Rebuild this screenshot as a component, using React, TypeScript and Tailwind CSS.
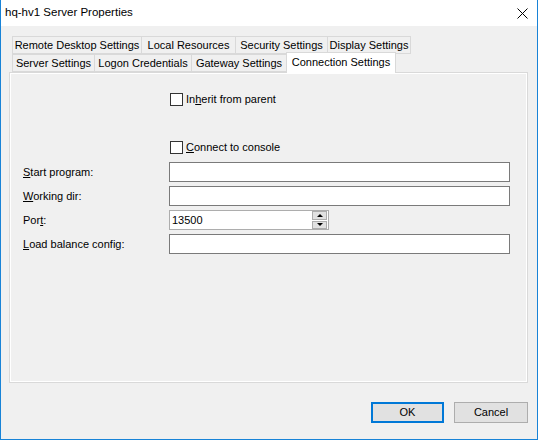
import type { ReactNode } from "react";

const TOP_TABS = [
	{ label: "Remote Desktop Settings", width: 129 },
	{ label: "Local Resources", width: 94 },
	{ label: "Security Settings", width: 92 },
	{ label: "Display Settings", width: 84 },
];

const BOTTOM_TABS = [
	{ label: "Server Settings", width: 82 },
	{ label: "Logon Credentials", width: 97 },
	{ label: "Gateway Settings", width: 95 },
	{ label: "Connection Settings", width: 110, active: true },
];

function Tab({
	label,
	width,
	active = false,
}: {
	label: string;
	width: number;
	active?: boolean;
}) {
	if (active) {
		return (
			<div
				className="relative z-10 -mb-px flex h-[21px] shrink-0 items-start justify-center whitespace-nowrap border border-b-0 border-[#d9d9d9] bg-white pt-[4px]"
				style={{ width }}
			>
				{label}
			</div>
		);
	}
	return (
		<div
			className="flex h-[18px] shrink-0 items-center justify-center whitespace-nowrap border border-r-0 border-[#d9d9d9] bg-[#f0f0f0] last:border-r"
			style={{ width }}
		>
			{label}
		</div>
	);
}

function Checkbox({ children }: { children: ReactNode }) {
	return (
		<div className="flex h-[17px] items-center gap-[3px] pl-[147px]">
			<span className="h-[13px] w-[13px] shrink-0 border border-[#333333] bg-white" />
			<span>{children}</span>
		</div>
	);
}

function Field({ label, children }: { label: ReactNode; children?: ReactNode }) {
	return (
		<div className="flex h-[20px] items-center">
			<div className="w-[146px] shrink-0">{label}</div>
			{children ?? (
				<div className="h-[20px] w-[341px] border border-[#7a7a7a] bg-white" />
			)}
		</div>
	);
}

function PortInput() {
	return (
		<div className="flex h-[20px] w-[160px] items-center border border-[#adadad] bg-white">
			<span className="flex-1 pl-[2px]">13500</span>
			<div className="mr-[1px] flex h-[18px] w-[15px] flex-col gap-px">
				<div className="flex flex-1 items-center justify-center border border-[#adadad] bg-[#e1e1e1]">
					<span className="h-0 w-0 border-x-[3px] border-b-[3px] border-x-transparent border-b-black" />
				</div>
				<div className="flex flex-1 items-center justify-center border border-[#adadad] bg-[#e1e1e1]">
					<span className="h-0 w-0 border-x-[3px] border-t-[3px] border-x-transparent border-t-black" />
				</div>
			</div>
		</div>
	);
}

export default function App() {
	return (
		<div
			className="flex h-[440px] w-[538px] flex-col border-x border-b border-[#1883d7] bg-[#f0f0f0] text-[11px] leading-none text-black"
			style={{ fontFamily: '"Liberation Sans", Arial, sans-serif' }}
		>
			{/* Title bar */}
			<div className="flex h-[26px] shrink-0 items-center justify-between bg-white pl-[4px] pr-[9px]">
				<span className="text-[11.5px]">hq-hv1 Server Properties</span>
				<svg width="11" height="11" viewBox="0 0 11 11">
					<path d="M0.5 0.5 L10.5 10.5 M10.5 0.5 L0.5 10.5" stroke="#000" strokeWidth="1" />
				</svg>
			</div>

			<div className="ml-[8px] mt-[10px] w-[519px]">
				{/* Tab strip, two rows */}
				<div className="flex flex-col pl-[3px]">
					<div className="flex h-[18px]">
						{TOP_TABS.map((tab) => (
							<Tab key={tab.label} {...tab} />
						))}
					</div>
					<div className="-mt-px flex h-[19px] items-end">
						{BOTTOM_TABS.map((tab) => (
							<Tab key={tab.label} {...tab} />
						))}
					</div>
				</div>

				{/* Tab page */}
				<div className="h-[311px] border border-[#d9d9d9]">
					<div className="flex h-full flex-col border border-white pl-[12px] pt-[17px]">
						<Checkbox>
							In<u>h</u>erit from parent
						</Checkbox>
						<div className="mt-[31px]">
							<Checkbox>
								<u>C</u>onnect to console
							</Checkbox>
						</div>
						<div className="mt-[6px] flex flex-col gap-[4px]">
							<Field
								label={
									<>
										<u>S</u>tart program:
									</>
								}
							/>
							<Field
								label={
									<>
										<u>W</u>orking dir:
									</>
								}
							/>
							<Field
								label={
									<>
										Por<u>t</u>:
									</>
								}
							>
								<PortInput />
							</Field>
							<Field
								label={
									<>
										<u>L</u>oad balance config:
									</>
								}
							/>
						</div>
					</div>
				</div>
			</div>

			{/* Dialog buttons */}
			<div className="mr-[9px] mt-[19px] flex justify-end gap-[10px]">
				<button className="flex h-[21px] w-[73px] items-center justify-center border-2 border-[#0078d7] bg-[#e1e1e1]">
					OK
				</button>
				<button className="flex h-[21px] w-[74px] items-center justify-center border border-[#adadad] bg-[#e1e1e1]">
					Cancel
				</button>
			</div>
		</div>
	);
}
